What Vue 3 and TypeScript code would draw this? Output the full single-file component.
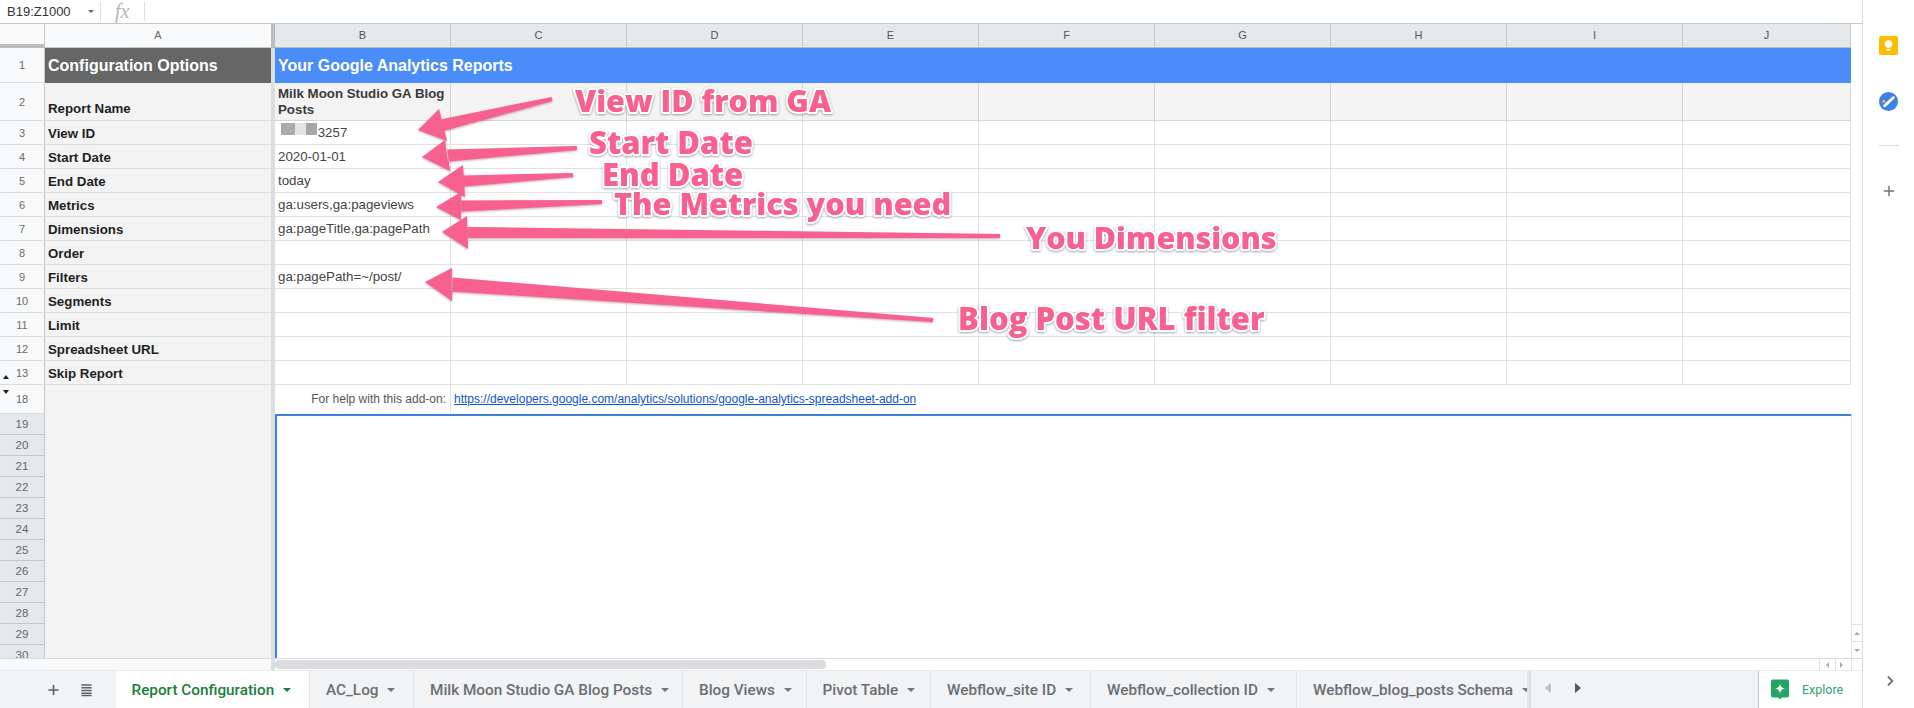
<script setup lang="ts">
type Pt = [number, number]
const columns = ['B', 'C', 'D', 'E', 'F', 'G', 'H', 'I', 'J']
const blankCols = ['C', 'D', 'E', 'F', 'G', 'H', 'I', 'J']
const rows = [
  { n: 3, label: 'View ID', value: '3257', masked: true },
  { n: 4, label: 'Start Date', value: '2020-01-01' },
  { n: 5, label: 'End Date', value: 'today' },
  { n: 6, label: 'Metrics', value: 'ga:users,ga:pageviews' },
  { n: 7, label: 'Dimensions', value: 'ga:pageTitle,ga:pagePath' },
  { n: 8, label: 'Order', value: '' },
  { n: 9, label: 'Filters', value: 'ga:pagePath=~/post/' },
  { n: 10, label: 'Segments', value: '' },
  { n: 11, label: 'Limit', value: '' },
  { n: 12, label: 'Spreadsheet URL', value: '' },
  { n: 13, label: 'Skip Report', value: '' },
]
const lowerRows = [19, 20, 21, 22, 23, 24, 25, 26, 27, 28, 29, 30]
const tabs = [
  { name: 'Report Configuration', width: 194.5, active: true },
  { name: 'AC_Log', width: 104 },
  { name: 'Milk Moon Studio GA Blog Posts', width: 269 },
  { name: 'Blog Views', width: 123.5 },
  { name: 'Pivot Table', width: 124.5 },
  { name: 'Webflow_site ID', width: 160 },
  { name: 'Webflow_collection ID', width: 206 },
  { name: 'Webflow_blog_posts Schema', width: 231 },
]

function arrow(tail: Pt, tip: Pt, c1: Pt, c2: Pt, tw: number, bw: number): string {
  const base: Pt = [(c1[0] + c2[0]) / 2, (c1[1] + c2[1]) / 2]
  const dx = base[0] - tail[0]
  const dy = base[1] - tail[1]
  const len = Math.hypot(dx, dy)
  const nx = -dy / len
  const ny = dx / len
  const pts: Pt[] = [
    [tail[0] + nx * tw, tail[1] + ny * tw],
    [base[0] + nx * bw, base[1] + ny * bw],
    c2,
    tip,
    c1,
    [base[0] - nx * bw, base[1] - ny * bw],
    [tail[0] - nx * tw, tail[1] - ny * tw],
  ]
  return pts.map((p) => p.join(',')).join(' ')
}

const arrows = [
  arrow([552, 99], [418, 130], [439, 109], [447, 141], 2, 6),
  arrow([577, 148], [422, 157], [445, 140], [450, 171], 2, 6),
  arrow([573, 175], [438, 182], [463, 165], [465, 197], 2, 5.5),
  arrow([602, 202], [436, 207], [461, 192], [461, 220], 2, 5.5),
  arrow([1000, 236], [442, 232], [467, 216], [468, 249], 2, 5.5),
  arrow([933, 320], [425, 282], [452, 268], [452, 301], 2, 7),
]
const labels = [
  { text: 'View ID from GA', x: 575, y: 112, size: 30.5 },
  { text: 'Start Date', x: 589, y: 154, size: 31 },
  { text: 'End Date', x: 602, y: 186, size: 31 },
  { text: 'The Metrics you need', x: 614, y: 215, size: 30.6 },
  { text: 'You Dimensions', x: 1026, y: 249, size: 30.4 },
  { text: 'Blog Post URL filter', x: 958, y: 330, size: 31 },
]
</script>

<template>
  <div class="app">
    <div class="main">
      <div class="sheet">
        <div class="toolbar">
          <span class="namebox">B19:Z1000</span>
          <span class="namecaret"></span>
          <span class="tooldiv"></span>
          <span class="fx">fx</span>
          <span class="tooldiv"></span>
        </div>

        <div class="line colhead">
          <div class="rowhead corner"></div>
          <div class="cola acell">A</div>
          <div class="gutter dark"></div>
          <div v-for="c in columns" :key="c" class="col chead">{{ c }}</div>
        </div>

        <div class="line r1">
          <div class="rowhead">1</div>
          <div class="cola title">Configuration Options</div>
          <div class="gutter"></div>
          <div class="bluebar">Your Google Analytics Reports</div>
        </div>

        <div class="line r2">
          <div class="rowhead">2</div>
          <div class="cola label bottom">Report Name</div>
          <div class="gutter"></div>
          <div class="col cell shaded wrap">Milk Moon Studio GA Blog Posts</div>
          <div v-for="c in blankCols" :key="c" class="col cell shaded"></div>
        </div>

        <div v-for="r in rows" :key="r.n" class="line rn">
          <div class="rowhead">
            <span v-if="r.n === 13" class="tri up"></span>{{ r.n }}
          </div>
          <div class="cola label">{{ r.label }}</div>
          <div class="gutter"></div>
          <div class="col cell">
            <span v-if="r.masked" class="mask">
              <i class="m1"></i><i class="m2"></i><i class="m3"></i>
            </span>
            {{ r.value }}
          </div>
          <div v-for="c in blankCols" :key="c" class="col cell"></div>
        </div>

        <div class="line r18">
          <div class="rowhead">
            <span class="tri down"></span>18
          </div>
          <div class="cola"></div>
          <div class="gutter"></div>
          <div class="col cell right">For help with this add-on:</div>
          <div class="linkcell">
            <a class="link">https://developers.google.com/analytics/solutions/google-analytics-spreadsheet-add-on</a>
          </div>
        </div>

        <div class="lower">
          <div class="lowerhead">
            <div v-for="n in lowerRows" :key="n" class="lownum">{{ n }}</div>
          </div>
          <div class="cola"></div>
          <div class="gutter"></div>
          <div class="selection"></div>
          <div class="vbar">
            <span class="sbtn"><i class="mini up"></i></span>
            <span class="sbtn"><i class="mini down"></i></span>
          </div>
        </div>

        <div class="hscroll">
          <div class="hleft"></div>
          <div class="htrack"><div class="hthumb"></div></div>
          <span class="hbtn"><i class="mini left"></i></span>
          <span class="hbtn"><i class="mini right"></i></span>
          <span class="hcorner"></span>
        </div>

        <div class="tabbar">
          <div class="tabtools">
            <svg class="tabicon" viewBox="0 0 14 14"><path d="M7 1.5v11M1.5 7h11" stroke="#5f6368" stroke-width="1.8" fill="none" /></svg>
            <svg class="tabicon" viewBox="0 0 14 14"><path d="M1.5 1.500h11M1.500 4.500h11M1.500 7.500h11M1.500 10.500h11M1.500 13h11" stroke="#5f6368" stroke-width="1.600" fill="none" /></svg>
          </div>
          <div class="tablist">
            <div
              v-for="t in tabs"
              :key="t.name"
              class="tab"
              :class="{ active: t.active }"
              :style="{ width: t.width + 'px' }"
            >
              <span class="tabname">{{ t.name }}</span>
              <span class="tabcaret"></span>
            </div>
          </div>
          <div class="tabnav">
            <i class="nav prev"></i>
            <i class="nav next"></i>
          </div>
          <div class="explore">
            <svg class="exicon" viewBox="0 0 20 22">
              <path d="M2 0h16a2 2 0 0 1 2 2v16a2 2 0 0 1-2 2h-6l-2 2-2-2H2a2 2 0 0 1-2-2V2a2 2 0 0 1 2-2z" fill="#23a566" />
              <path d="M10 4.500c.6 3.300 2.200 4.900 5.500 5.500-3.300.6-4.900 2.200-5.500 5.500-.6-3.300-2.200-4.900-5.500-5.500 3.300-.6 4.900-2.200 5.500-5.500z" fill="#fff" />
            </svg>
            <span>Explore</span>
          </div>
        </div>
      </div>

      <aside class="side">
        <div class="keep">
          <svg viewBox="0 0 20 20" class="sideicon">
            <rect width="20" height="20" rx="2" fill="#fbbc04" />
            <circle cx="10" cy="8.500" r="4" fill="#fff" />
            <rect x="8" y="13.500" width="4" height="1.800" fill="#fff" />
          </svg>
        </div>
        <div class="tasks">
          <svg viewBox="0 0 20 20" class="sideicon">
            <circle cx="10" cy="10" r="10" fill="#3f7fe6" />
            <path d="M6 14.500L15 6" stroke="#fff" stroke-width="3" stroke-linecap="round" />
            <circle cx="5" cy="10" r="1.500" fill="#f5c33b" />
          </svg>
        </div>
        <div class="sep"></div>
        <svg viewBox="0 0 14 14" class="addicon"><path d="M7 1v12M1 7h12" stroke="#70757a" stroke-width="1.700" fill="none" /></svg>
        <svg viewBox="0 0 10 14" class="chev"><path d="M2 2l5 5-5 5" stroke="#5f6368" stroke-width="2" fill="none" /></svg>
      </aside>
    </div>

    <svg class="notes" viewBox="0 0 1914 708">
      <g class="arrows">
        <polygon v-for="(p, i) in arrows" :key="i" :points="p" />
      </g>
      <text
        v-for="l in labels"
        :key="l.text"
        :x="l.x"
        :y="l.y"
        :font-size="l.size"
        class="note"
      >{{ l.text }}</text>
    </svg>
  </div>
</template>

<style>
html, body { margin: 0; padding: 0; background: #fff; }
</style>

<style scoped>
.app {
  position: relative;
  width: 1914px;
  height: 708px;
  overflow: hidden;
  background: #fff;
  font-family: "Liberation Sans", Arial, sans-serif;
  color: #333;
}
.main { display: flex; height: 708px; }
.sheet { width: 1862px; display: flex; flex-direction: column; flex: none; }

.toolbar {
  height: 23px;
  display: flex;
  align-items: center;
  border-bottom: 1px solid #c4c7c9;
  font-size: 13px;
  color: #333;
  flex: none;
}
.namebox { margin-left: 7px; width: 81px; }
.namecaret {
  width: 0; height: 0;
  border-left: 3px solid transparent;
  border-right: 3px solid transparent;
  border-top: 3px solid #666;
  margin-right: 6px;
}
.tooldiv { width: 1px; height: 19px; background: #e0e0e0; }
.fx {
  font-family: "Liberation Serif", serif;
  font-style: italic;
  font-size: 20px;
  color: #b5b5b5;
  width: 43px;
  padding-left: 14px;
  box-sizing: border-box;
}

.line { display: flex; flex: none; }
.colhead { height: 24px; }
.r1 { height: 35px; }
.r2 { height: 38px; }
.rn { height: 24px; }
.r18 { height: 29px; }

.rowhead {
  position: relative;
  width: 45px;
  flex: none;
  box-sizing: border-box;
  background: #f8f9fa;
  border-right: 1px solid #c8c8c8;
  border-bottom: 1px solid #dcdcdc;
  display: flex;
  align-items: center;
  justify-content: center;
  font-size: 11px;
  color: #6b6b6b;
}
.corner { border-bottom: 4px solid #bdbdbd; }
.cola {
  width: 226px;
  flex: none;
  box-sizing: border-box;
  background: #f3f3f3;
}
.acell {
  background: #f8f9fa;
  border-bottom: 1px solid #c8c8c8;
  text-align: center;
  font-size: 11px;
  line-height: 23px;
  color: #666;
}
.gutter { width: 4px; flex: none; background: #dadfe3; }
.gutter.dark { background: #bdbdbd; }
.col {
  width: 176px;
  flex: none;
  box-sizing: border-box;
}
.col:last-child { width: 168px; }
.chead {
  background: #e6e9ec;
  border-right: 1px solid #c8c8c8;
  border-bottom: 1px solid #b8bcc0;
  text-align: center;
  font-size: 11px;
  line-height: 23px;
  color: #555;
}
.title {
  background: #666;
  color: #fff;
  font-weight: 700;
  font-size: 16px;
  line-height: 35px;
  padding-left: 3px;
}
.bluebar {
  flex: 1;
  background: #4a8df9;
  color: #fff;
  font-weight: 700;
  font-size: 16px;
  line-height: 35px;
  padding-left: 3px;
  margin-right: 11px;
}
.label {
  font-weight: 700;
  font-size: 13.300px;
  color: #1f1f1f;
  line-height: 24px;
  padding-left: 3px;
  padding-top: 1px;
  border-bottom: 1px solid #dcdcdc;
}
.label.bottom { padding-top: 14px; }
.cell {
  position: relative;
  border-right: 1px solid #e2e2e2;
  border-bottom: 1px solid #e2e2e2;
  padding-left: 3px;
  padding-top: 1px;
  font-size: 13.300px;
  line-height: 22px;
  color: #444;
  white-space: nowrap;
}
.shaded { background: #f3f3f3; border-color: #d6d6d6; }
.wrap {
  white-space: normal;
  font-weight: 700;
  line-height: 16px;
  padding-top: 3px;
  color: #3a3a3a;
}
.right {
  text-align: right;
  padding-right: 4px;
  padding-top: 0;
  border-bottom: none;
  line-height: 29px;
  font-size: 12px;
  color: #555;
}
.linkcell {
  flex: 1;
  line-height: 29px;
  padding-left: 3px;
  font-size: 12px;
}
.link { color: #1155cc; text-decoration: underline; }

.mask {
  display: inline-flex;
  height: 12px;
  margin: 0 -3px 0 3px;
  vertical-align: 2px;
}
.mask i { display: block; height: 12px; }
.m1 { width: 14px; background: #ababab; }
.m2 { width: 11px; background: #e4e4e4; }
.m3 { width: 11px; background: #a6a6a6; }

.tri {
  position: absolute;
  left: 3px;
  width: 0; height: 0;
  border-left: 3px solid transparent;
  border-right: 3px solid transparent;
}
.tri.up { bottom: 5px; border-bottom: 4px solid #222; }
.tri.down { top: 5px; border-top: 4px solid #222; }

.lower {
  height: 244px;
  flex: none;
  display: flex;
  overflow: hidden;
}
.lowerhead { width: 45px; flex: none; }
.lownum {
  box-sizing: border-box;
  height: 21px;
  background: #e6e9ec;
  border-right: 1px solid #c8c8c8;
  border-bottom: 1px solid #c4c8cc;
  text-align: center;
  font-size: 11.500px;
  line-height: 20px;
  color: #666;
}
.selection {
  flex: 1;
  box-sizing: border-box;
  border-top: 2px solid #3d7fd9;
  border-left: 2px solid #3d7fd9;
}
.vbar {
  width: 11px;
  flex: none;
  box-sizing: border-box;
  border-left: 1px solid #e2e2e2;
  display: flex;
  flex-direction: column;
  justify-content: flex-end;
  background: #fff;
}
.sbtn {
  height: 16px;
  flex: none;
  border-top: 1px solid #e2e2e2;
  display: flex;
  align-items: center;
  justify-content: center;
}
.mini { display: block; width: 0; height: 0; }
.mini.up { border-left: 3px solid transparent; border-right: 3px solid transparent; border-bottom: 3px solid #aaa; }
.mini.down { border-left: 3px solid transparent; border-right: 3px solid transparent; border-top: 3px solid #aaa; }
.mini.left { border-top: 3px solid transparent; border-bottom: 3px solid transparent; border-right: 3px solid #aaa; }
.mini.right { border-top: 3px solid transparent; border-bottom: 3px solid transparent; border-left: 3px solid #aaa; }

.hscroll {
  height: 12px;
  flex: none;
  display: flex;
  box-sizing: border-box;
  border-top: 1px solid #dadada;
  background: #fff;
}
.hleft { width: 271px; flex: none; background: #f8f9fa; }
.htrack { width: 1548px; flex: none; border-left: 4px solid #dadfe3; box-sizing: border-box; }
.hthumb {
  width: 551px;
  height: 9px;
  margin-top: 1px;
  background: #dadce0;
  border-radius: 4px;
}
.hbtn {
  width: 16px;
  flex: none;
  box-sizing: border-box;
  border-left: 1px solid #e2e2e2;
  display: flex;
  align-items: center;
  justify-content: center;
}
.hcorner { flex: 1; border-left: 1px solid #e2e2e2; }

.tabbar {
  flex: 1;
  display: flex;
  background: #f1f3f4;
  border-top: 1px solid #e8eaed;
  box-sizing: border-box;
  min-height: 0;
}
.tabtools {
  width: 115.500px;
  flex: none;
  display: flex;
  align-items: center;
  justify-content: flex-end;
  gap: 20px;
  padding: 0 23px 0 0;
  box-sizing: border-box;
}
.tabicon { width: 13px; height: 14px; }
.tablist {
  display: flex;
  width: 1412.500px;
  flex: none;
  overflow: hidden;
  box-shadow: 3px 0 0 #e0e2e4;
}
.tab {
  flex: none;
  box-sizing: border-box;
  display: flex;
  align-items: center;
  padding-left: 16px;
  gap: 9px;
  border-right: 1px solid #e2e4e6;
  font-family: Roboto, sans-serif;
  font-weight: 500;
  font-size: 15.300px;
  color: #6b6f73;
  white-space: nowrap;
  overflow: hidden;
}
.tab.active { background: #fff; color: #188038; }
.tabcaret {
  width: 0; height: 0; flex: none;
  border-left: 4px solid transparent;
  border-right: 4px solid transparent;
  border-top: 4px solid #777;
}
.tab.active .tabcaret { border-top-color: #188038; }
.tabnav {
  width: 230px;
  flex: none;
  display: flex;
  align-items: center;
  gap: 24px;
  padding-left: 17px;
  box-sizing: border-box;
  padding-bottom: 4px;
}
.nav { display: block; width: 0; height: 0; border-top: 5px solid transparent; border-bottom: 5px solid transparent; }
.prev { border-right: 6px solid #bdbdbd; }
.next { border-left: 6px solid #555; }
.explore {
  flex: 1;
  display: flex;
  align-items: center;
  gap: 13px;
  background: #fff;
  border-left: 1px solid #c4c7c9;
  padding-left: 12px;
  font-family: Roboto, sans-serif;
  font-weight: 400;
  font-size: 12.500px;
  color: #2fa56c;
}
.exicon { width: 18px; height: 21px; flex: none; }

.side {
  position: relative;
  flex: 1;
  box-sizing: border-box;
  border-left: 1px solid #dadce0;
  display: flex;
  flex-direction: column;
  align-items: center;
}
.sideicon { display: block; width: 19px; height: 19px; }
.keep { margin-top: 36px; }
.tasks { margin-top: 37px; }
.sep { width: 20px; height: 1px; background: #dadce0; margin-top: 34px; }
.addicon { width: 12px; height: 12px; margin-top: 39px; }
.chev { position: absolute; left: 23px; top: 675px; width: 9px; height: 12px; }

.notes {
  position: absolute;
  left: 0;
  top: 0;
  width: 1914px;
  height: 708px;
  pointer-events: none;
}
.arrows polygon {
  fill: #f7608f;
  filter: drop-shadow(0 1px 1px rgba(90, 0, 40, 0.35));
}
.note {
  font-family: "Open Sans", sans-serif;
  font-weight: 800;
  fill: #f7608f;
  stroke: #fff;
  stroke-width: 4px;
  paint-order: stroke;
  stroke-linejoin: round;
  filter: drop-shadow(0 1px 1px rgba(0, 0, 0, 0.35));
}
</style>
